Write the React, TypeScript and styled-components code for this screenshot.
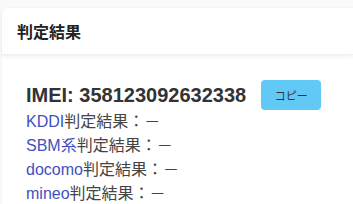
import styled, { createGlobalStyle } from 'styled-components';

const GlobalStyle = createGlobalStyle`
  body {
    margin: 0;
    background: #fafafa;
    font-family: "Liberation Sans", Arial, "Noto Sans CJK JP", sans-serif;
    color: #333;
  }
`;

const Card = styled.section`
  margin: 8px 0 0 2px;
  background: #fff;
  border-radius: 6px 0 0 0;
  box-shadow: 0 0 2px rgba(0, 0, 0, 0.08);
  min-height: 196px;
`;

const CardHeader = styled.header`
  height: 47px;
  padding: 0 15px;
  display: flex;
  align-items: center;
  font-size: 16px;
  font-weight: bold;
  color: #222;
  box-shadow: 0 2px 4px rgba(0, 0, 0, 0.06);
  border-bottom: 1px solid #f0f0f0;
  box-sizing: border-box;
`;

const CardBody = styled.div`
  padding: 25px 24px 0;
`;

const ImeiRow = styled.div`
  display: flex;
  align-items: center;
  gap: 15px;
  height: 30px;
`;

const Imei = styled.span`
  font-size: 20px;
  font-weight: bold;
  color: #333;
`;

const CopyButton = styled.button`
  width: 60px;
  height: 30px;
  border: none;
  border-radius: 4px;
  background: #62c8f5;
  color: #333;
  font-size: 11px;
  font-family: inherit;
  padding: 0;
`;

const ResultList = styled.ul`
  list-style: none;
  margin: 0;
  padding: 0;
`;

const ResultItem = styled.li`
  font-size: 16px;
  line-height: 24px;
  color: #444;
`;

const Carrier = styled.a`
  color: #3f51c0;
  text-decoration: none;
`;

const results = [
  { carrier: 'KDDI', label: '判定結果：－' },
  { carrier: 'SBM系', label: '判定結果：－' },
  { carrier: 'docomo', label: '判定結果：－' },
  { carrier: 'mineo', label: '判定結果：－' },
];

export default function App() {
  return (
    <>
      <GlobalStyle />
      <Card>
        <CardHeader>判定結果</CardHeader>
        <CardBody>
          <ImeiRow>
            <Imei>IMEI: 358123092632338</Imei>
            <CopyButton>コピー</CopyButton>
          </ImeiRow>
          <ResultList>
            {results.map(({ carrier, label }) => (
              <ResultItem key={carrier}>
                <Carrier href="#">{carrier}</Carrier>
                {label}
              </ResultItem>
            ))}
          </ResultList>
        </CardBody>
      </Card>
    </>
  );
}
